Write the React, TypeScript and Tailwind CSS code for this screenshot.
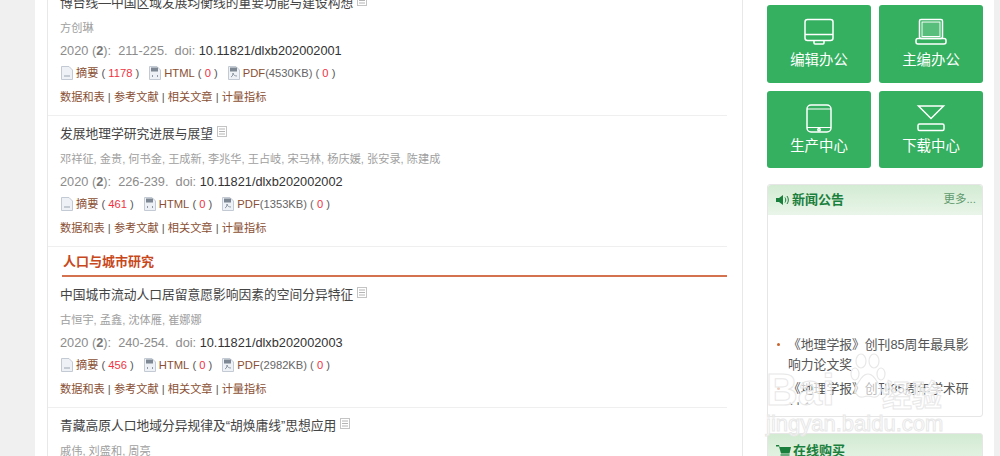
import type { ReactNode } from 'react';

const FONT = "font-['Liberation_Sans','Noto_Sans_CJK_SC',sans-serif]";

type Article = {
  title: string;
  authors: string;
  pages: string;
  doi: string;
  abstractCount: string;
  pdfSize: string;
};

const FIRST: Article[] = [
  {
    title: '博台线—中国区域发展均衡线的重要功能与建设构想',
    authors: '方创琳',
    pages: '211-225',
    doi: '10.11821/dlxb202002001',
    abstractCount: '1178',
    pdfSize: '4530KB',
  },
  {
    title: '发展地理学研究进展与展望',
    authors: '邓祥征, 金贵, 何书金, 王成新, 李兆华, 王占岐, 宋马林, 杨庆媛, 张安录, 陈建成',
    pages: '226-239',
    doi: '10.11821/dlxb202002002',
    abstractCount: '461',
    pdfSize: '1353KB',
  },
];

const SECOND: Article[] = [
  {
    title: '中国城市流动人口居留意愿影响因素的空间分异特征',
    authors: '古恒宇, 孟鑫, 沈体雁, 崔娜娜',
    pages: '240-254',
    doi: '10.11821/dlxb202002003',
    abstractCount: '456',
    pdfSize: '2982KB',
  },
  {
    title: '青藏高原人口地域分异规律及“胡焕庸线”思想应用',
    authors: '戚伟, 刘盛和, 周亮',
    pages: '255-266',
    doi: '10.11821/dlxb202002004',
    abstractCount: '320',
    pdfSize: '2210KB',
  },
];

function ListIcon() {
  return (
    <svg width="10" height="11" viewBox="0 0 10 11" className="ml-[4px] mb-[5px] shrink-0">
      <rect x="0.5" y="0.5" width="9" height="10" fill="#ffffff" stroke="#c4c4c4" />
      <path d="M2 3h6M2 5.5h6M2 8h6" stroke="#b4b4b4" strokeWidth="1" />
    </svg>
  );
}

function FileIcon({ kind }: { kind: 'doc' | 'html' | 'pdf' }) {
  return (
    <svg width="12" height="14" viewBox="0 0 12 14" className="shrink-0">
      <path d="M0.5 0.5H8L11.5 4V13.5H0.5Z" fill="#eef1f5" stroke="#c3cad3" />
      {kind !== 'doc' && <rect x="2" y="1.5" width="7" height="4" fill="#7d8894" />}
      {kind === 'doc' && <path d="M3 10h6" stroke="#9aa5b1" strokeWidth="1" />}
      {kind === 'html' && <path d="M3 10l1-1M3 10l1 1M9 10l-1-1M9 10l-1 1" stroke="#76818e" strokeWidth="0.8" />}
      {kind === 'pdf' && <path d="M3 11c2-1 2-3 2-4 0 2 2 3 4 3" stroke="#76818e" strokeWidth="0.8" fill="none" />}
    </svg>
  );
}

function Row({ article }: { article: Article }) {
  return (
    <div className="border-b border-[#efefef] pb-[10px] pl-[12px]">
      <div className="flex h-[35px] items-center text-[12.75px] text-[#444444]">
        <span>{article.title}</span>
        <ListIcon />
      </div>
      <div className="flex h-[16px] items-center text-[11.2px] text-[#a0a0a0]">{article.authors}</div>
      <div className="mt-[7px] flex h-[16px] items-center whitespace-pre text-[12.75px] text-[#8c8c8c]">
        2020 (<b className="text-[#777777]">2</b>):  {article.pages}.  doi: <span className="text-[#333333]">{article.doi}</span>
      </div>
      <div className="mt-[6px] flex h-[16px] items-center whitespace-pre text-[11.2px] text-[#8a4f33]">
        <span className="ml-[1px] mr-[3px]"><FileIcon kind="doc" /></span>
        摘要
        <span className="text-[#555555]"> ( </span>
        <span className="text-[#f0333f]">{article.abstractCount}</span>
        <span className="text-[#555555]"> )</span>
        <span className="ml-[10px] mr-[3px]"><FileIcon kind="html" /></span>
        HTML<span className="text-[#555555]"> ( </span>
        <span className="text-[#f0333f]">0</span>
        <span className="text-[#555555]"> )</span>
        <span className="ml-[10px] mr-[3px]"><FileIcon kind="pdf" /></span>
        PDF<span className="text-[#666666]">({article.pdfSize}) ( </span>
        <span className="text-[#f0333f]">0</span>
        <span className="text-[#555555]"> )</span>
      </div>
      <div className="mt-[8px] flex h-[16px] items-center whitespace-pre text-[11.2px] text-[#8a4f33]">
        数据和表<span className="text-[#555555]"> | </span>参考文献<span className="text-[#555555]"> | </span>相关文章<span className="text-[#555555]"> | </span>计量指标
      </div>
    </div>
  );
}

function Card({ label, icon }: { label: string; icon: ReactNode }) {
  return (
    <div className="flex h-[77.5px] w-[104px] flex-col items-center rounded-[3px] bg-[#34b060] pt-[13px] text-white">
      <div className="h-[30px]">{icon}</div>
      <div className="mt-[2px] text-[14.4px] leading-[20px]">{label}</div>
    </div>
  );
}

const ICON = { fill: 'none', stroke: '#ffffff', strokeWidth: 1.5 };

function Monitor() {
  return (
    <svg width="32" height="28" viewBox="0 0 32 28" {...ICON}>
      <rect x="2" y="1.5" width="28" height="21" rx="2.5" />
      <path d="M2 16.5h28M11 22.5v2.5a1 1 0 0 0 1 1h8a1 1 0 0 0 1-1v-2.5" />
    </svg>
  );
}

function Laptop() {
  return (
    <svg width="32" height="28" viewBox="0 0 32 28" {...ICON}>
      <rect x="4.5" y="1.5" width="23" height="19" rx="1.5" />
      <rect x="7" y="4" width="18" height="14.5" fill="#ffffff" fillOpacity="0.18" strokeWidth="1" />
      <rect x="1" y="20.5" width="30" height="5.5" rx="2" />
    </svg>
  );
}

function Tablet() {
  return (
    <svg width="28" height="30" viewBox="0 0 28 30" {...ICON}>
      <rect x="2" y="1" width="24" height="27" rx="4" />
      <path d="M2 5h24M2 23.5h24" strokeWidth="1" />
      <circle cx="14" cy="25.8" r="1.2" />
    </svg>
  );
}

function Download() {
  return (
    <svg width="30" height="30" viewBox="0 0 30 30" {...ICON}>
      <path d="M2.5 2h25L15 14.5Z" />
      <rect x="2" y="20" width="26" height="6.5" rx="1.5" />
    </svg>
  );
}

function BoxHeader({ icon, title, more }: { icon: ReactNode; title: string; more?: string }) {
  return (
    <div className="flex h-[30px] items-center justify-between rounded-t-[3px] bg-gradient-to-b from-[#d3ebd3] to-[#e9f5e9] pl-[8px] pr-[6px]">
      <div className="flex items-center gap-[2px] text-[13px] font-bold text-[#1a7f3c]">
        {icon}
        {title}
      </div>
      {more && <span className="text-[11.5px] text-[#5f9a6d]">{more}</span>}
    </div>
  );
}

function Speaker() {
  return (
    <svg width="14" height="12" viewBox="0 0 14 12">
      <path d="M0 4h3l4-3v10L3 8H0Z" fill="#1a7f3c" />
      <path d="M9 3.5c1 1.5 1 3.5 0 5M11 2c1.8 2.4 1.8 5.6 0 8" stroke="#1a7f3c" strokeWidth="1" fill="none" />
    </svg>
  );
}

function Cart() {
  return (
    <svg width="15" height="15" viewBox="0 0 15 15">
      <path d="M0 1h3l.6 2H15l-1.5 6.5H5L3 2.5H0Z" fill="#1a7f3c" />
      <path d="M4.5 11h9" stroke="#1a7f3c" strokeWidth="1.2" />
      <circle cx="6" cy="13.3" r="1.4" fill="#1a7f3c" />
      <circle cx="12" cy="13.3" r="1.4" fill="#1a7f3c" />
    </svg>
  );
}

function NewsItem({ text }: { text: string }) {
  return (
    <li className="relative pl-[20px] pr-[12px] text-[12.8px] leading-[20px] text-[#555555]">
      <span className="absolute left-[9px] top-[8px] h-[3px] w-[3px] rounded-full bg-[#c8632c]" />
      {text}
    </li>
  );
}

function Watermark() {
  return (
    <div className="pointer-events-none absolute left-[766px] top-[350px] h-[84px] w-[184px] text-white/70 [-webkit-text-stroke:1px_#e8e8e8]">
      <svg width="36" height="50" viewBox="0 0 36 50" className="absolute left-[84px] top-[2px]" fill="#ffffff" fillOpacity="0.6" stroke="#e8e8e8" strokeWidth="1.2">
        <ellipse cx="11" cy="9" rx="5" ry="7" />
        <ellipse cx="24" cy="9" rx="5" ry="7" />
        <ellipse cx="5" cy="22" rx="4" ry="6" />
        <ellipse cx="31" cy="22" rx="4" ry="6" />
        <path d="M18 22c6 0 8 7 12 12 3 5-1 12-7 11-3-1-7-1-10 0-6 1-10-6-7-11 4-5 6-12 12-12Z" />
      </svg>
      <span className="absolute left-0 top-[18px] text-[44px] font-bold leading-[44px]">Bai</span>
      <span className="absolute left-[116px] top-[30px] text-[30px] font-bold leading-[32px]">经验</span>
      <span className="absolute left-0 top-[62px] text-[22px] leading-[24px]">jingyan.baidu.com</span>
    </div>
  );
}

export default function App() {
  return (
    <div className={`relative h-[456px] overflow-hidden bg-[#f0f0f0] ${FONT}`}>
      <div className="ml-[35px] flex h-full w-[959px] bg-white">
        <div className="ml-[12px] w-[696px] shrink-0 border-x border-[#e8e8e8]">
          <div className="-mt-[15px] pr-[15px]">
            {FIRST.map((a) => (
              <Row key={a.doi} article={a} />
            ))}
            <div className="ml-[14px] flex h-[30px] items-center border-b-2 border-[#d4714f] pl-[1px] pt-[2px] text-[13px] font-bold text-[#c8481c]">
              人口与城市研究
            </div>
            {SECOND.map((a) => (
              <Row key={a.doi} article={a} />
            ))}
          </div>
        </div>

        <div className="ml-[24px] w-[216px] shrink-0 pt-[5px]">
          <div className="grid grid-cols-[104px_104px] gap-x-[8px] gap-y-[8px]">
            <Card label="编辑办公" icon={<Monitor />} />
            <Card label="主编办公" icon={<Laptop />} />
            <Card label="生产中心" icon={<Tablet />} />
            <Card label="下载中心" icon={<Download />} />
          </div>

          <div className="mt-[16px] h-[233px] rounded-[3px] border border-[#e6e6e6]">
            <BoxHeader icon={<Speaker />} title="新闻公告" more="更多..." />
            <div className="h-[190px] overflow-hidden pt-[120px]">
              <ul className="space-y-[4px]">
                <NewsItem text="《地理学报》创刊85周年最具影响力论文奖" />
                <NewsItem text="《地理学报》创刊85周年学术研讨会" />
              </ul>
            </div>
          </div>

          <div className="mt-[16px] rounded-[3px] border border-[#e6e6e6] pt-[2px] bg-[#d3ebd3]">
            <BoxHeader icon={<Cart />} title="在线购买" />
          </div>
        </div>
      </div>
      <Watermark />
    </div>
  );
}
